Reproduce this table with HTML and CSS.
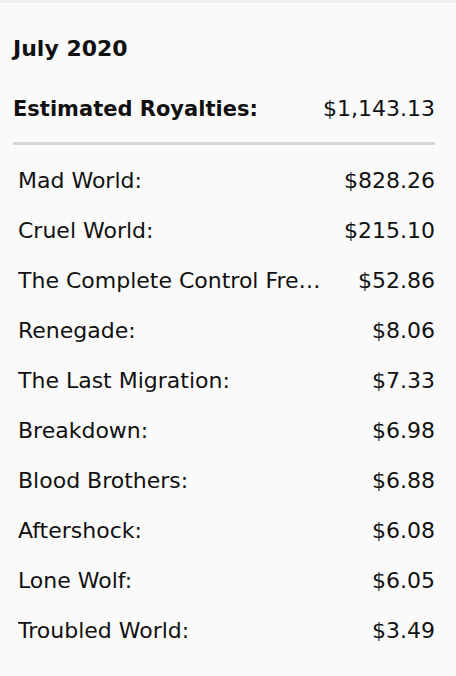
FILE: index.html
```html
<!DOCTYPE html>
<html>
<head>
<meta charset="utf-8">
<link rel="stylesheet" href="styles.css">
</head>
<body>
<div class="topbar"></div>
<main class="card">
  <h1 class="month">July 2020</h1>
  <div class="total">
    <span class="total-label">Estimated Royalties:</span>
    <span class="total-value">$1,143.13</span>
  </div>
  <hr class="divider">
  <ul class="rows">
    <li class="row"><span class="name">Mad World:</span><span class="amount">$828.26</span></li>
    <li class="row"><span class="name">Cruel World:</span><span class="amount">$215.10</span></li>
    <li class="row"><span class="name">The Complete Control Freak Trilogy:</span><span class="amount">$52.86</span></li>
    <li class="row"><span class="name">Renegade:</span><span class="amount">$8.06</span></li>
    <li class="row"><span class="name">The Last Migration:</span><span class="amount">$7.33</span></li>
    <li class="row"><span class="name">Breakdown:</span><span class="amount">$6.98</span></li>
    <li class="row"><span class="name">Blood Brothers:</span><span class="amount">$6.88</span></li>
    <li class="row"><span class="name">Aftershock:</span><span class="amount">$6.08</span></li>
    <li class="row"><span class="name">Lone Wolf:</span><span class="amount">$6.05</span></li>
    <li class="row"><span class="name">Troubled World:</span><span class="amount">$3.49</span></li>
  </ul>
</main>
</body>
</html>
```
FILE: styles.css
```css
html, body {
  margin: 0;
  padding: 0;
  background: #fafafa;
}
body {
  font-family: "DejaVu Sans", "Noto Sans", sans-serif;
  color: #111;
  width: 456px;
  height: 676px;
  overflow: hidden;
}
.topbar {
  height: 3px;
  background: #efefef;
}
.card {
  padding: 0 21px 0 13px;
}
.month {
  margin: 0;
  padding-top: 31px;
  font-size: 22px;
  font-weight: 700;
  line-height: 30px;
}
.total {
  display: flex;
  justify-content: space-between;
  align-items: baseline;
  margin-top: 30px;
  font-size: 22px;
  line-height: 30px;
}
.total-label {
  font-weight: 700;
  font-size: 21px;
}
.total-value {
  font-weight: 400;
}
.divider {
  margin: 18px 0 0;
  border: 0;
  height: 3px;
  background: #d5d5d5;
}
.rows {
  list-style: none;
  margin: 0;
  padding: 21px 0 0 5px;
}
.row {
  display: flex;
  align-items: baseline;
  font-size: 22px;
  height: 50px;
  line-height: 30px;
}
.name {
  flex: 1;
  min-width: 0;
  white-space: nowrap;
  overflow: hidden;
  text-overflow: ellipsis;
}
.amount {
  margin-left: 36px;
  white-space: nowrap;
}
```
